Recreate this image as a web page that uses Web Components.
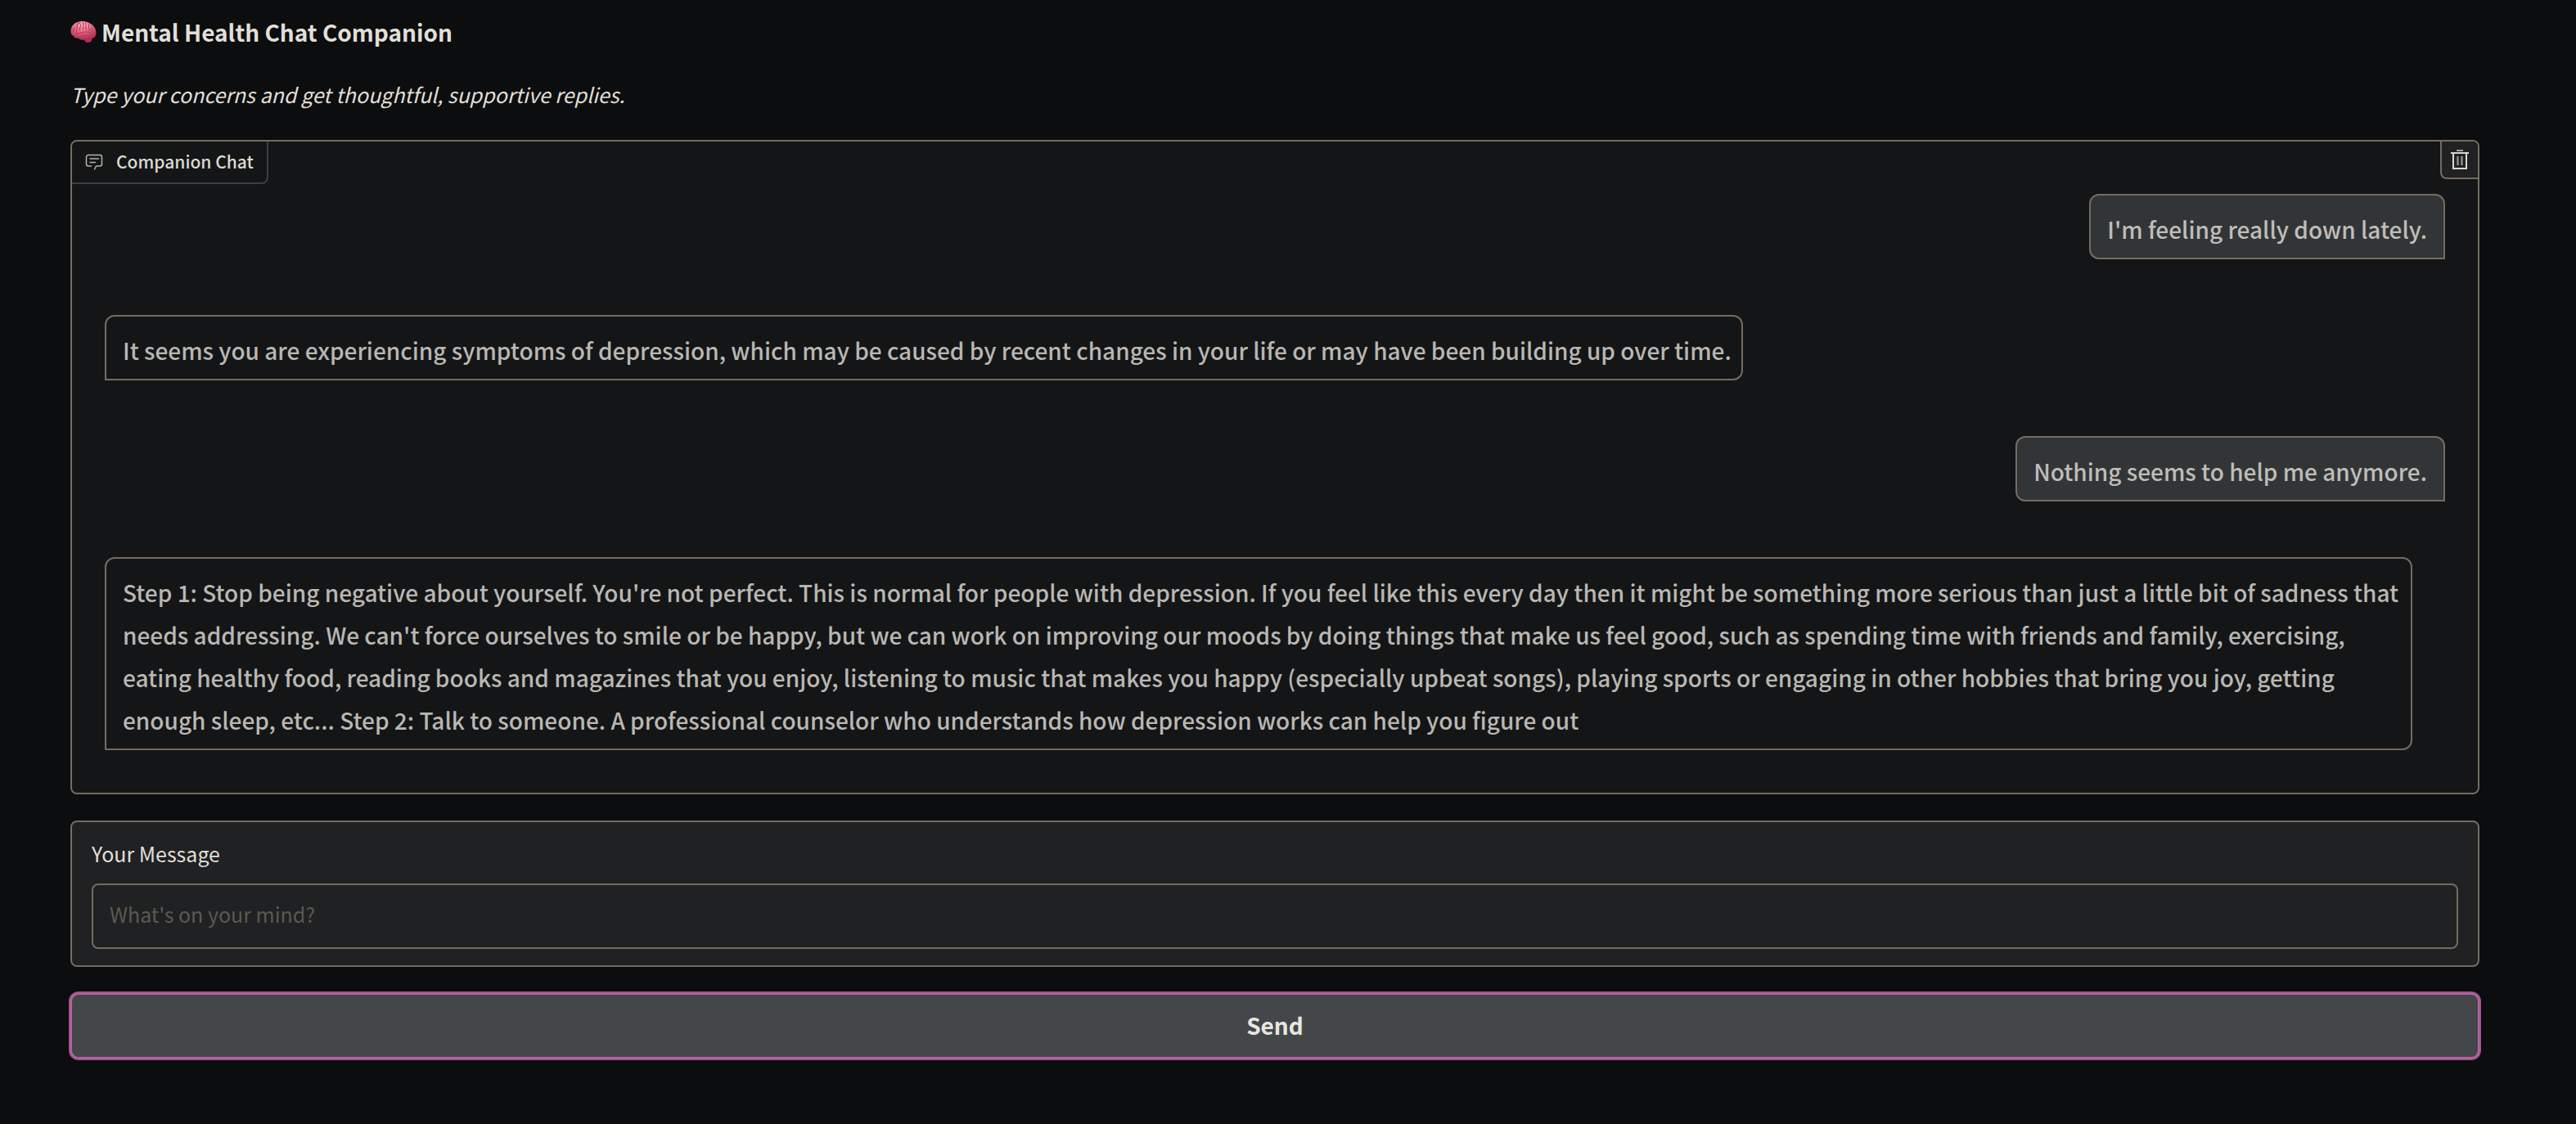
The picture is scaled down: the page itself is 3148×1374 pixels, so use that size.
<!DOCTYPE html>
<html lang="en">
<head>
<meta charset="utf-8">
<title>Mental Health Chat Companion</title>
<style>
  html { background: #0b0d0e; }
  body {
    margin: 0;
    font-family: "Noto Sans CJK SC", "Noto Sans", sans-serif;
    color: #e2dfd9;
    --line: #746c61;
    --panel: #141517;
    --block: #202123;
  }
</style>
</head>
<body>
<companion-app>
  <app-heading slot="heading">
    Mental Health Chat Companion
    <span slot="tagline">Type your concerns and get thoughtful, supportive replies.</span>
  </app-heading>
  <chat-log label="Companion Chat">
    <chat-bubble from="user">I'm feeling really down lately.</chat-bubble>
    <chat-bubble from="bot">It seems you are experiencing symptoms of depression, which may be caused by recent changes in your life or may have been building up over time.</chat-bubble>
    <chat-bubble from="user">Nothing seems to help me anymore.</chat-bubble>
    <chat-bubble from="bot">Step 1: Stop being negative about yourself. You're not perfect. This is normal for people with depression. If you feel like this every day then it might be something more serious than just a little bit of sadness that needs addressing. We can't force ourselves to smile or be happy, but we can work on improving our moods by doing things that make us feel good, such as spending time with friends and family, exercising, eating healthy food, reading books and magazines that you enjoy, listening to music that makes you happy (especially upbeat songs), playing sports or engaging in other hobbies that bring you joy, getting enough sleep, etc... Step 2: Talk to someone. A professional counselor who understands how depression works can help you figure out</chat-bubble>
  </chat-log>
  <message-field label="Your Message" placeholder="What's on your mind?"></message-field>
  <send-button>Send</send-button>
</companion-app>

<script>
const define = (name, html, setup) => {
  const template = document.createElement('template');
  template.innerHTML = html;
  customElements.define(name, class extends HTMLElement {
    constructor() {
      super();
      this.attachShadow({ mode: 'open' }).append(template.content.cloneNode(true));
    }
    connectedCallback() { if (setup) setup(this, this.shadowRoot); }
  });
};

define('companion-app', `
  <style>
    :host { display: block; padding: 15px 118px 80px 86px; }
    main { display: flex; flex-direction: column; gap: 32px; }
  </style>
  <main><slot name="heading"></slot><slot></slot></main>`);

define('brain-icon', `
  <style>:host { display: block; width: 32px; height: 26px; } svg { display: block; }</style>
  <svg width="32" height="26" viewBox="0 0 32 26" aria-hidden="true">
    <defs>
      <radialGradient id="g" cx=".45" cy=".2" r=".8">
        <stop offset="0" stop-color="#f7a5b4"/><stop offset=".5" stop-color="#e4637f"/><stop offset="1" stop-color="#a62f50"/>
      </radialGradient>
    </defs>
    <path d="M15 20c3-1.500 8-1.500 11.500 0 .5 3-1 6-5 6-3 0-4-2-6.500-6z" fill="#b02f50"/>
    <path d="M.5 12C.5 6 5 1 11 .5c3-.8 8-.7 12 1.500 5 2 8.500 7 8.500 12 0 4-2 7-5 7-3 1.500-6 0-8 1-3 1.500-7 1-9-1.500-3 .5-5-.5-5.500-2.500C1.500 17 .5 15 .5 12z" fill="url(#g)"/>
    <g fill="none" stroke="#b2395b" stroke-width="1.100" stroke-linecap="round">
      <path d="M3.500 13c0-3 2-4 2-8M7.500 14c-1-3 2-5 1-9 0-2 2-3 3-3M11.500 11c-1-3 2-4 1-7M15.500 10c-1-3 2-4 0-8M19.500 10c-2-2 1-4-1-8M23 12c1-3-1-5-1-8M27 14c0-3-1-5-2-7M6 16c3 0 4-2 7-2s4-2 7-1 4 0 5 1M9 18.500c4 1 5-2 9-1.500s6 1 10-1"/>
    </g>
    <g fill="none" stroke="#fbc0c8" stroke-width="1" stroke-linecap="round" opacity=".8">
      <path d="M4.500 7l1-2M10 6l1-2M14 7V3M17.500 6V3M20.500 7V3M24.500 8l-1-2"/>
    </g>
  </svg>`);

define('app-heading', `
  <style>
    :host { display: flex; flex-direction: column; gap: 28px; }
    h1 { display: flex; align-items: center; gap: 6px; margin: 0; font-size: 28px; line-height: 48px; font-weight: 700; }
    p { margin: 0; font-size: 25px; line-height: 48px; font-style: italic; }
  </style>
  <h1><brain-icon></brain-icon><span><slot></slot></span></h1>
  <p><slot name="tagline"></slot></p>`);

define('chat-log', `
  <style>
    :host { display: block; border: 2px solid var(--line); border-radius: 8px; background: var(--panel); overflow: hidden; }
    header { display: flex; justify-content: space-between; align-items: flex-start; height: 64px; }
    .tab { display: flex; align-items: center; gap: 16px; padding: 0 16px; height: 50px;
      border: solid #3d3f44; border-width: 0 2px 2px 0; border-radius: 0 0 8px 0;
      font-size: 21px; line-height: 48px; font-weight: 500; color: #dcdad0; }
    #label { padding-bottom: 2px; }
    .tab svg, button svg { display: block; }
    button { display: flex; align-items: center; justify-content: center; box-sizing: border-box; width: 46px; height: 46px; padding: 0;
      border: solid var(--line); border-width: 0 0 2px 2px; border-radius: 0 0 0 8px; background: var(--block); }
    .list { display: flex; flex-direction: column; gap: 68px; padding: 0 40px 52px; }
  </style>
  <header>
    <div class="tab">
      <svg width="22" height="22" viewBox="0 0 22 22" fill="none" stroke="#b5b3ab" stroke-width="1.500" stroke-linecap="round" stroke-linejoin="round" aria-hidden="true">
        <path d="M7.500 16H4a2.500 2.500 0 0 1-2.500-2.500V5A2.500 2.500 0 0 1 4 2.500h14A2.500 2.500 0 0 1 20.500 5v8.500A2.500 2.500 0 0 1 18 16h-4.500L11.500 20M6 7h10.500M6 11.500h6.500"/>
      </svg>
      <span id="label"></span>
    </div>
    <button type="button" aria-label="Clear">
      <svg width="22" height="26" viewBox="0 0 22 26" fill="none" stroke="#d8d6cf" stroke-width="2" aria-hidden="true">
        <path d="M7 2h8" stroke="#a3a29c"/>
        <path d="M0 5h22M3 5v19h16V5"/>
        <path d="M8.500 9v11M13.500 9v11" stroke="#a3a29c"/>
      </svg>
    </button>
  </header>
  <div class="list" role="log"><slot></slot></div>`,
  (host, root) => { root.getElementById('label').textContent = host.getAttribute('label'); });

define('chat-bubble', `
  <style>
    :host { display: block; box-sizing: border-box; align-self: flex-start; margin-right: 40px; padding: 15px 12px 9px 20px;
      border: 2px solid var(--line); border-radius: 12px 12px 12px 0;
      font-size: 28px; line-height: 52px; font-weight: 500; color: #b9b7b2; }
    :host([from="user"]) { align-self: flex-end; margin-right: 0; padding-right: 20px; border-radius: 12px 12px 0 12px; background: #323537; color: #bfbdb9; }
  </style>
  <slot></slot>`);

define('message-field', `
  <style>
    :host { display: block; padding: 18px 24px 20px; border: 2px solid var(--line); border-radius: 8px; background: var(--block); }
    label { display: block; margin-bottom: 17px; font-size: 25px; line-height: 40px; }
    input { display: block; box-sizing: border-box; width: 100%; height: 80px; margin: 0; padding: 0 20px 6px;
      border: 2px solid var(--line); border-radius: 8px; background: none; outline: none;
      font: inherit; font-size: 25px; color: inherit; }
    input::placeholder { color: #5b5951; opacity: 1; }
  </style>
  <label for="text"></label>
  <input id="text" type="text">`,
  (host, root) => {
    root.querySelector('label').textContent = host.getAttribute('label');
    root.querySelector('input').placeholder = host.getAttribute('placeholder');
  });

define('send-button', `
  <style>
    :host { display: block; }
    button { display: block; box-sizing: border-box; width: 100%; height: 80px; padding: 0 0 2px;
      border: 2px solid #b4659f; border-radius: 10px; box-shadow: 0 0 0 2px #a2568f; background: #434749;
      font: inherit; font-size: 28px; font-weight: 700; line-height: 48px; color: #e8e6e1; }
  </style>
  <button type="button"><slot></slot></button>`);
</script>
</body>
</html>
